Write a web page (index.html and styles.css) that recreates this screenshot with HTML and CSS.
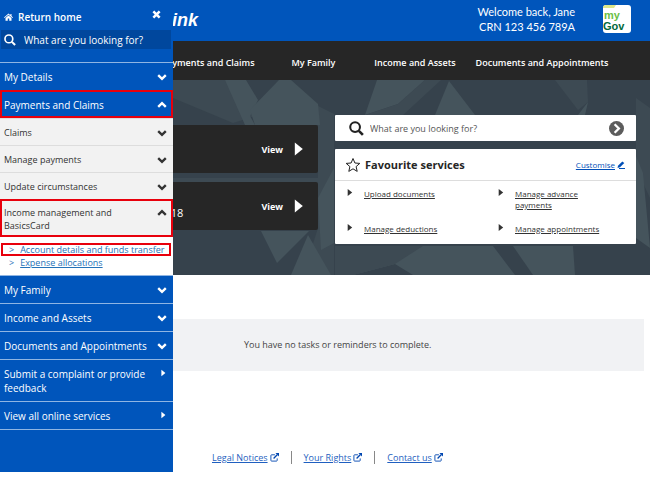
FILE: index.html
```html
<!DOCTYPE html>
<html lang="en">
<head>
    <meta charset="UTF-8">
    <meta name="viewport" content="width=device-width, initial-scale=1.0">
    <title>Centrelink online account</title>
    <link rel="stylesheet" href="styles.css">
</head>
<body>
    <svg class="sprite" aria-hidden="true">
        <symbol id="chev" viewBox="0 0 10 10"><path d="M1.200 3.200 L5 6.800 L8.800 3.200" fill="none" stroke="currentColor" stroke-width="2.400"/></symbol>
        <symbol id="tri" viewBox="0 0 10 10"><path d="M3 1 L8 5 L3 9 Z" fill="currentColor"/></symbol>
        <symbol id="mag" viewBox="0 0 16 16"><circle cx="6.500" cy="6.500" r="5.200" fill="none" stroke="currentColor" stroke-width="2.200"/><path d="M10.500 10.500 L14.800 14.800" stroke="currentColor" stroke-width="2.800"/></symbol>
        <symbol id="ext" viewBox="0 0 10 10"><path d="M5.500 2 H1.800 Q1 2 1 2.800 V8.200 Q1 9 1.800 9 H7.200 Q8 9 8 8.200 V6" fill="none" stroke="currentColor"/><path d="M4 6 L8 2" stroke="currentColor" stroke-width="1.500"/><path d="M6 0 H10 V4 Z" fill="currentColor"/></symbol>
    </svg>

    <div class="page">
        <header class="header">
            <a href="#" class="brand">centrelink</a>
            <p class="welcome">Welcome back, Jane<br>CRN 123 456 789A</p>
            <a href="#" class="mygov" aria-label="myGov">
                <svg viewBox="0 0 28 28">
                    <rect width="28" height="28" rx="3" fill="#fff"/>
                    <path d="M0 3 Q0 0 3 0 H13 L11 3 H0 Z" fill="#dde78a"/>
                    <text x="1" y="14" class="my">my</text>
                    <text x="0" y="25" class="gov">Gov</text>
                </svg>
            </a>
        </header>

        <nav class="topnav">
            <a href="#">Payments and Claims</a>
            <a href="#">My Family</a>
            <a href="#">Income and Assets</a>
            <a href="#">Documents and Appointments</a>
        </nav>

        <main>
            <section class="hero">
                <svg class="facets" viewBox="0 2 477 195" preserveAspectRatio="none" aria-hidden="true">
                    <path class="mid" d="M0 2 H52 L82 38 L60 45 L0 20 Z"/>
                    <path class="mid" d="M0 100 H160 V110 H0 Z"/>
                    <path class="mid" d="M145 28 L161 36 V197 H130 L145 150 Z"/>
                    <path class="lit" d="M52 2 H73 L85 22 L77 38 L82 47 H72 Z"/>
                    <path class="lit" d="M77 32 L106 2 H118 L145 26 L147 47 H82 Z"/>
                    <path class="lit" d="M204 2 H252 L225 26 L192 37 Z"/>
                    <path class="mid" d="M252 2 H268 L230 37 H192 L225 26 Z"/>
                    <path class="lit" d="M276 3 L302 37 H262 Z"/>
                    <path class="lit" d="M415 24 L412 37 H405 Z"/>
                    <path class="mid" d="M382 2 H414 L415 24 L405 32 Z"/>
                    <path class="lit" d="M161 90 V165 L148 172 L145 120 Z"/>
                    <path class="lit" d="M88 153 H136 L104 185 Z"/>
                    <path class="lit" d="M135 157 L158 197 H118 Z"/>
                    <path class="lit" d="M162 168 H320 L342 197 H240 L222 186 L180 197 Z"/>
                    <path class="mid" d="M162 168 H250 L222 186 L180 197 H162 Z"/>
                    <path class="lit" d="M340 168 H400 L402 197 H360 Z"/>
                    <path class="mid" d="M463 20 L477 30 V120 L463 90 Z"/>
                    <path class="lit" d="M463 78 L470 95 L477 170 L463 160 Z"/>
                </svg>
                <div class="cards">
                    <div class="card"><a href="#">View</a><svg class="play"><use href="#tri"/></svg></div>
                    <div class="card"><span class="date">2018</span><a href="#">View</a><svg class="play"><use href="#tri"/></svg></div>
                </div>
                <div class="services">
                    <form class="search">
                        <svg class="search-icon"><use href="#mag"/></svg>
                        <input type="text" placeholder="What are you looking for?" aria-label="Search services">
                        <button type="button" aria-label="Search">
                            <svg viewBox="0 0 16 16"><circle cx="8" cy="8" r="8" fill="#5c5c5c"/><path d="M6 3.500 L10.500 8 L6 12.500" fill="none" stroke="#fff" stroke-width="2.500"/></svg>
                        </button>
                    </form>
                    <div class="favourites">
                        <div class="fav-head">
                            <svg class="star" viewBox="0 0 16 16"><path d="M8 1.500 L9.900 6 L14.800 6.400 L11.100 9.600 L12.200 14.400 L8 11.800 L3.800 14.400 L4.900 9.600 L1.200 6.400 L6.100 6 Z" fill="none" stroke="#222"/></svg>
                            <h2>Favourite services</h2>
                            <a href="#" class="customise">Customise</a>
                            <svg class="pencil" viewBox="0 0 8 8"><path d="M1 4.800 L5.300 0.500 L7.300 2 L3 6.300 L0.500 7 Z" fill="#004fb8"/><path d="M2 7.500 H8" stroke="#004fb8"/></svg>
                        </div>
                        <ul class="fav-list">
                            <li><svg><use href="#tri"/></svg><a href="#">Upload documents</a></li>
                            <li><svg><use href="#tri"/></svg><a href="#">Manage advance payments</a></li>
                            <li><svg><use href="#tri"/></svg><a href="#">Manage deductions</a></li>
                            <li><svg><use href="#tri"/></svg><a href="#">Manage appointments</a></li>
                        </ul>
                    </div>
                </div>
            </section>
            <p class="tasks">You have no tasks or reminders to complete.</p>
        </main>

        <footer class="footer">
            <a href="#">Legal Notices</a><svg><use href="#ext"/></svg>
            <span class="bar"></span>
            <a href="#">Your Rights</a><svg><use href="#ext"/></svg>
            <span class="bar"></span>
            <a href="#">Contact us</a><svg><use href="#ext"/></svg>
        </footer>
    </div>

    <aside class="drawer">
        <div class="drawer-head">
            <svg class="home" viewBox="0 0 12 10"><path d="M0 5.500 L6 0.300 L8.500 2.500 V1 H10 V3.800 L12 5.500 L11.200 6.300 L6 1.900 L0.800 6.300 Z M2 6.200 L6 2.900 L10 6.200 V10 H7 V7 H5 V10 H2 Z" fill="#fff"/></svg>
            <a href="#">Return home</a>
            <button type="button" class="close" aria-label="Close menu">
                <svg viewBox="0 0 10 10"><path d="M1.500 1.500 L8.500 8.500 M8.500 1.500 L1.500 8.500" stroke="#fff" stroke-width="2.800"/></svg>
            </button>
        </div>
        <form class="drawer-search">
            <svg><use href="#mag"/></svg>
            <input type="text" placeholder="What are you looking for?" aria-label="Search menu">
        </form>
        <nav class="menu">
            <button type="button" class="item">My Details<svg><use href="#chev"/></svg></button>
            <button type="button" class="item open marked">Payments and Claims<svg><use href="#chev"/></svg></button>
            <div class="submenu">
                <button type="button" class="sub">Claims<svg><use href="#chev"/></svg></button>
                <button type="button" class="sub">Manage payments<svg><use href="#chev"/></svg></button>
                <button type="button" class="sub">Update circumstances<svg><use href="#chev"/></svg></button>
                <button type="button" class="sub open marked">Income management and BasicsCard<svg><use href="#chev"/></svg></button>
                <ul class="links">
                    <li class="marked"><span>&gt;</span><a href="#">Account details and funds transfer</a></li>
                    <li><span>&gt;</span><a href="#">Expense allocations</a></li>
                </ul>
            </div>
            <button type="button" class="item">My Family<svg><use href="#chev"/></svg></button>
            <button type="button" class="item">Income and Assets<svg><use href="#chev"/></svg></button>
            <button type="button" class="item">Documents and Appointments<svg><use href="#chev"/></svg></button>
            <a href="#" class="item">Submit a complaint or provide feedback<svg><use href="#tri"/></svg></a>
            <a href="#" class="item last">View all online services<svg><use href="#tri"/></svg></a>
        </nav>
    </aside>
</body>
</html>
```
FILE: styles.css
```css
* {
    box-sizing: border-box;
}
body {
    position: relative;
    margin: 0;
    font-family: "Open Sans", "Noto Sans", sans-serif;
    font-size: 10px;
    color: #333;
    background: #fff;
}
button, input {
    font-family: inherit;
    border: none;
    background: none;
    padding: 0;
}
ul, p, h2 {
    margin: 0;
    padding: 0;
    list-style: none;
}
svg {
    flex-shrink: 0;
    display: block;
}
.sprite {
    display: none;
}

/* header */
.header {
    display: flex;
    align-items: center;
    height: 41px;
    padding: 0 19px 4px 0;
    background: #0055bb;
    color: #fff;
}
.brand {
    width: 198px;
    padding-top: 4px;
    text-align: right;
    font-family: "Liberation Sans", Arial, sans-serif;
    font-size: 18px;
    font-weight: bold;
    font-style: italic;
    color: #fff;
    text-decoration: none;
}
.welcome {
    margin-left: auto;
    font-family: Lato, sans-serif;
    font-size: 11px;
    line-height: 15px;
    text-align: right;
}
.mygov {
    margin-left: 28px;
}
.mygov svg {
    width: 28px;
    height: 28px;
}
.my, .gov {
    font-family: "Liberation Sans", Arial, sans-serif;
    font-size: 11px;
    font-weight: bold;
    fill: #6abf45;
}
.gov {
    fill: #00693c;
}
.topnav {
    display: grid;
    grid-template-columns: 112fr 99fr 104fr 150fr;
    align-items: center;
    justify-items: center;
    height: 39px;
    padding: 3px 33px 0 152px;
    background: #262626;
}
.topnav a {
    font-size: 9px;
    font-weight: 600;
    color: #fff;
    text-decoration: none;
    white-space: nowrap;
}

/* hero */
.hero {
    position: relative;
    display: flex;
    gap: 17px;
    padding: 35px 14px 31px 0;
    background: #36424c;
}
.facets {
    position: absolute;
    top: 0;
    right: 0;
    width: calc(100% - 173px);
    height: 100%;
}
.lit {
    fill: #45545c;
}
.mid {
    fill: #3d4a53;
}
.cards {
    position: relative;
    flex: 1;
    display: flex;
    flex-direction: column;
    gap: 9px;
    padding-top: 10px;
}
.card {
    display: flex;
    align-items: center;
    justify-content: flex-end;
    height: 48px;
    padding-right: 11px;
    background: #262626;
    border-radius: 2px;
    color: #fff;
}
.card a {
    font-size: 9px;
    font-weight: bold;
    color: #fff;
    text-decoration: none;
}
.date {
    align-self: flex-end;
    margin-right: 78px;
    padding-bottom: 8px;
    font-size: 11px;
    line-height: 18px;
}
.play {
    width: 18px;
    height: 16px;
    margin-left: 6px;
}
.services {
    position: relative;
    width: 301px;
}
.search {
    display: flex;
    align-items: center;
    height: 26px;
    margin-bottom: 8px;
    padding: 0 12px 0 14px;
    background: #fff;
    border-radius: 1px;
}
.search-icon {
    width: 15px;
    height: 15px;
    color: #222;
}
.search input {
    flex: 1;
    min-width: 0;
    margin-left: 6px;
    font-size: 9px;
}
.search input::placeholder {
    color: #555;
}
.search button svg {
    width: 15px;
    height: 15px;
}
.favourites {
    background: #fff;
    border-radius: 1px;
}
.fav-head {
    display: flex;
    align-items: center;
    height: 32px;
    padding: 0 11px 0 10px;
    border-bottom: 1px solid #ddd;
}
.star {
    width: 16px;
    height: 16px;
}
.fav-head h2 {
    flex: 1;
    margin-left: 4px;
    font-size: 11px;
    color: #262626;
}
.customise {
    margin-right: 2px;
    font-size: 8px;
    color: #004fb8;
}
.pencil {
    width: 8px;
    height: 8px;
}
.fav-list {
    display: grid;
    grid-template-columns: 151fr 140fr;
    row-gap: 13px;
    padding: 7px 0 10px 10px;
}
.fav-list li {
    display: flex;
    gap: 10px;
    padding-right: 30px;
    line-height: 11px;
}
.fav-list svg {
    width: 9px;
    height: 9px;
}
.fav-list a {
    font-size: 8px;
    color: #333;
}

/* tasks and footer */
.tasks {
    margin: 44px 6px 0 0;
    padding: 17px 0 17px 244px;
    font-size: 9px;
    line-height: 18px;
    color: #444;
    background: #f1f2f4;
}
.footer {
    display: flex;
    align-items: center;
    margin-top: 80px;
    padding: 0 0 13px 212px;
}
.footer a {
    font-size: 9px;
    color: #1f5fc0;
}
.footer svg {
    width: 9px;
    height: 9px;
    margin-left: 2px;
    color: #0046b0;
}
.bar {
    width: 1px;
    height: 13px;
    margin: 0 12px;
    background: #888;
}

/* slide-out menu */
.drawer {
    position: absolute;
    top: 0;
    left: 0;
    width: 173px;
    padding-bottom: 42px;
    background: #0055bb;
    color: #fff;
}
.drawer-head {
    display: flex;
    align-items: center;
    height: 30px;
    padding: 3px 12px 0 4px;
}
.drawer-head a {
    flex: 1;
    margin-left: 5px;
    font-size: 10px;
    font-weight: 600;
    color: #fff;
    text-decoration: none;
}
.home {
    width: 9px;
    height: 8px;
}
.close {
    padding-bottom: 4px;
}
.close svg {
    width: 9px;
    height: 9px;
}
.drawer-search {
    display: flex;
    align-items: center;
    height: 19px;
    margin: 0 2px 13px 1px;
    padding-left: 3px;
    background: #00479d;
}
.drawer-search svg {
    width: 12px;
    height: 12px;
}
.drawer-search input {
    flex: 1;
    min-width: 0;
    margin-left: 8px;
    font-size: 10px;
    color: #fff;
}
.drawer-search input::placeholder {
    color: #fff;
}
.item, .sub {
    display: flex;
    justify-content: space-between;
    width: 100%;
    padding: 7px 6px 6px 4px;
    font-size: 10px;
    line-height: 14px;
    text-align: left;
    text-decoration: none;
    color: #fff;
    border-top: 1px solid #8fb5e3;
}
.item svg, .sub svg {
    width: 10px;
    height: 10px;
    margin-top: 2px;
}
a.item svg {
    width: 8px;
    height: 8px;
}
.open svg {
    transform: rotate(180deg);
}
.last {
    border-bottom: 1px solid #8fb5e3;
}
.marked {
    outline: 2px solid #e8000c;
    outline-offset: -2px;
}
.submenu {
    background: #fff;
}
.sub {
    padding: 7px 6px 6px 4px;
    font-size: 9px;
    line-height: 13px;
    font-weight: 500;
    color: #333;
    background: #f2f2f2;
    border-top: 1px solid #ddd;
}
.sub.marked {
    padding: 6px 6px 5px 4px;
}
.links {
    padding: 6px 2px 6px 1px;
}
.links li {
    display: flex;
    gap: 6px;
    padding-left: 8px;
    font-size: 9px;
    line-height: 13px;
    color: #2472b8;
}
.links a {
    color: #2472b8;
}
```
